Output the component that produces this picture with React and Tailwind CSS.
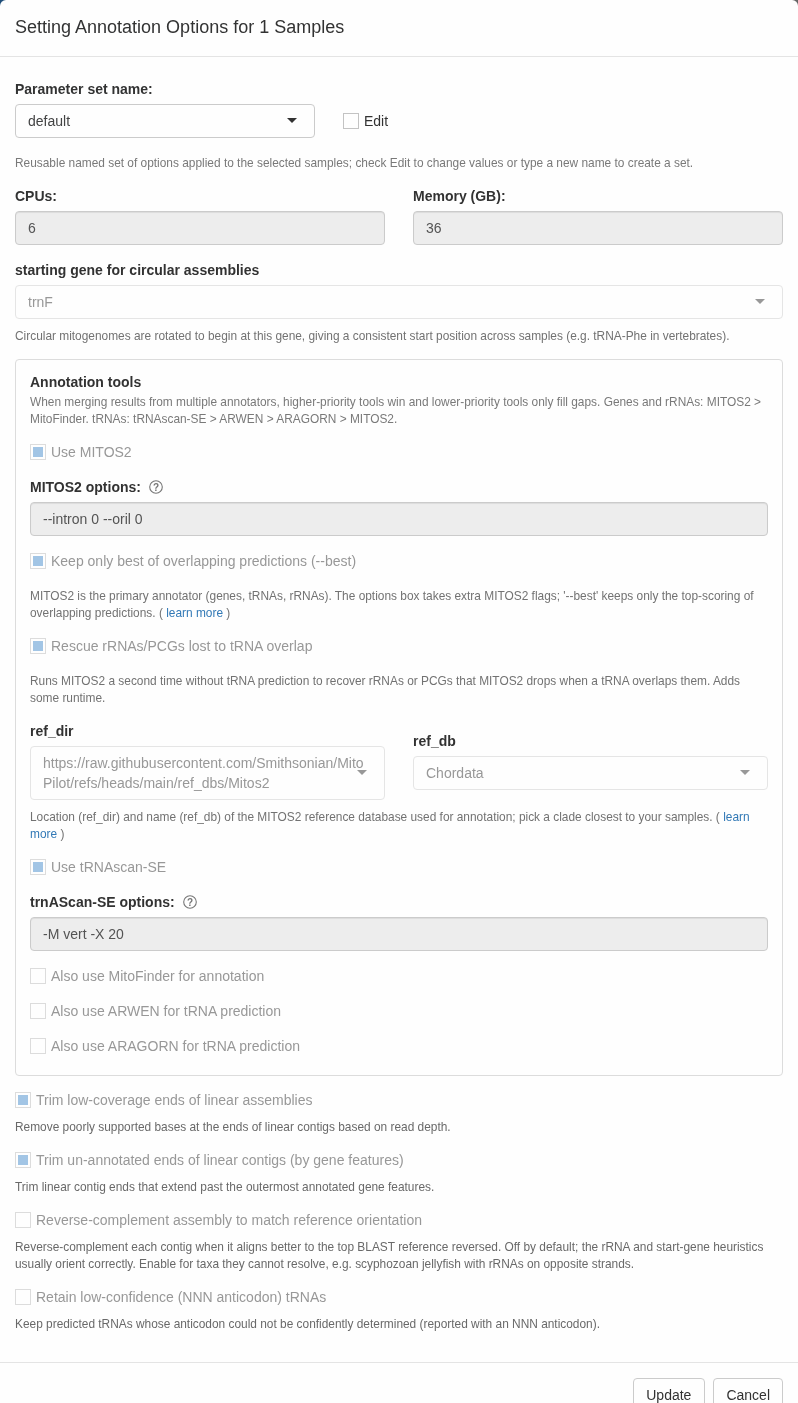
import React from "react";

function Caret({ muted }) {
  return (
    <span
      className={`w-0 h-0 border-x-[5px] border-x-transparent border-t-[5px] ${
        muted ? "border-t-[#999999]" : "border-t-[#333333]"
      }`}
    />
  );
}

function Help({ children, className = "" }) {
  return <p className={`text-[11.9px] leading-[17px] ${className}`}>{children}</p>;
}

function Label({ children, className = "" }) {
  return <label className={`block font-bold text-sm leading-5 text-[#333333] ${className}`}>{children}</label>;
}

function Check({ checked, children, className = "" }) {
  return (
    <label className={`flex items-center h-4 text-sm leading-5 text-[#999999] ${className}`}>
      <span className="flex items-center justify-center w-4 h-4 mr-[5px] border border-[#dddddd] bg-white shrink-0">
        {checked && <span className="block w-2.5 h-2.5 bg-[#a3c6e6]" />}
      </span>
      {children}
    </label>
  );
}

function ReadonlyInput({ value }) {
  return (
    <div className="flex items-center h-[34px] px-3 rounded border border-[#cccccc] bg-[#eeeeee] text-sm text-[#555555] shadow-[inset_0_1px_1px_rgba(0,0,0,0.075)]">
      {value}
    </div>
  );
}

function MutedSelect({ value }) {
  return (
    <div className="flex items-center justify-between h-[34px] pl-3 pr-[17px] rounded border border-[#e6e6e6] bg-white text-sm text-[#999999]">
      <span>{value}</span>
      <Caret muted />
    </div>
  );
}

function HelpIcon() {
  return (
    <svg width="14" height="14" viewBox="0 0 14 14" className="ml-2 shrink-0">
      <circle cx="7" cy="7" r="6.3" fill="none" stroke="#777777" strokeWidth="1.1" />
      <text x="7" y="10.5" textAnchor="middle" fontSize="10" fontWeight="700" fill="#777777" fontFamily="Liberation Sans">?</text>
    </svg>
  );
}

function Link({ children }) {
  return <a className="text-[#337ab7]">{children}</a>;
}

export default function App() {
  return (
    <div className="h-screen overflow-hidden bg-[linear-gradient(to_right,#1f4e79_50%,#666666_50%)] font-['Liberation_Sans',Arial,sans-serif]">
      <div className="rounded-t-md bg-white text-sm text-[#333333] [will-change:transform] opacity-[0.999]">
        <header className="px-[15px] py-[15px] border-b border-[#e5e5e5]">
          <h4 className="text-lg leading-[25.7px] text-[#333333]">Setting Annotation Options for 1 Samples</h4>
        </header>

        <main className="px-[15px] pt-[22px] pb-[29px]">
          <Label>Parameter set name:</Label>
          <div className="flex items-center mt-[5px]">
            <div className="flex items-center justify-between w-[300px] h-[34px] pl-3 pr-[17px] rounded border border-[#cccccc] bg-white text-[#444444]">
              <span>default</span>
              <Caret />
            </div>
            <label className="flex items-center ml-7 text-[#333333]">
              <span className="w-4 h-4 mr-[5px] border border-[#c4c4c4] bg-white" />
              Edit
            </label>
          </div>
          <Help className="mt-[17px] text-[#7a7a7a]">
            Reusable named set of options applied to the selected samples; check Edit to change values or type a new name to create a set.
          </Help>

          <div className="grid grid-cols-2 gap-7 mt-3.5">
            <div>
              <Label>CPUs:</Label>
              <div className="mt-[5px]"><ReadonlyInput value="6" /></div>
            </div>
            <div>
              <Label>Memory (GB):</Label>
              <div className="mt-[5px]"><ReadonlyInput value="36" /></div>
            </div>
          </div>

          <Label className="mt-[15px]">starting gene for circular assemblies</Label>
          <div className="mt-[5px]"><MutedSelect value="trnF" /></div>
          <Help className="mt-[9px] text-[#737373]">
            Circular mitogenomes are rotated to begin at this gene, giving a consistent start position across samples (e.g. tRNA-Phe in vertebrates).
          </Help>

          <section className="mt-[14px] rounded border border-[#dddddd] px-[14px] pt-3 pb-[21px]">
            <Label>Annotation tools</Label>
            <Help className="mt-0.5 text-[#7a7a7a]">
              When merging results from multiple annotators, higher-priority tools win and lower-priority tools only fill gaps. Genes and rRNAs: MITOS2 &gt; MitoFinder. tRNAs: tRNAscan-SE &gt; ARWEN &gt; ARAGORN &gt; MITOS2.
            </Help>

            <Check checked className="mt-4">Use MITOS2</Check>

            <div className="flex items-center mt-[17px]">
              <Label>MITOS2 options:</Label>
              <HelpIcon />
            </div>
            <div className="mt-[5px]"><ReadonlyInput value="--intron 0 --oril 0" /></div>

            <Check checked className="mt-[17px]">Keep only best of overlapping predictions (--best)</Check>
            <Help className="mt-[19px] text-[#737373]">
              MITOS2 is the primary annotator (genes, tRNAs, rRNAs). The options box takes extra MITOS2 flags; '--best' keeps only the top-scoring of overlapping predictions. ( <Link>learn more</Link> )
            </Help>

            <Check checked className="mt-4">Rescue rRNAs/PCGs lost to tRNA overlap</Check>
            <Help className="mt-[19px] text-[#737373]">
              Runs MITOS2 a second time without tRNA prediction to recover rRNAs or PCGs that MITOS2 drops when a tRNA overlaps them. Adds some runtime.
            </Help>

            <div className="grid grid-cols-2 gap-7 items-center mt-3.5">
              <div>
                <Label>ref_dir</Label>
                <div className="relative mt-[5px] h-[54px] pl-3 pr-[19px] py-1.5 rounded border border-[#e6e6e6] bg-white text-sm leading-5 text-[#999999] break-all">
                  https://raw.githubusercontent.com/Smithsonian/MitoPilot/refs/heads/main/ref_dbs/Mitos2
                  <span className="absolute right-[17px] top-[23px] flex"><Caret muted /></span>
                </div>
              </div>
              <div>
                <Label>ref_db</Label>
                <div className="mt-[5px]"><MutedSelect value="Chordata" /></div>
              </div>
            </div>
            <Help className="mt-[9px] text-[#737373]">
              Location (ref_dir) and name (ref_db) of the MITOS2 reference database used for annotation; pick a clade closest to your samples. ( <Link>learn more</Link> )
            </Help>

            <Check checked className="mt-4">Use tRNAscan-SE</Check>

            <div className="flex items-center mt-[17px]">
              <Label>trnAScan-SE options:</Label>
              <HelpIcon />
            </div>
            <div className="mt-[5px]"><ReadonlyInput value="-M vert -X 20" /></div>

            <Check className="mt-[17px]">Also use MitoFinder for annotation</Check>
            <Check className="mt-[19px]">Also use ARWEN for tRNA prediction</Check>
            <Check className="mt-[19px]">Also use ARAGORN for tRNA prediction</Check>
          </section>

          <Check checked className="mt-4">Trim low-coverage ends of linear assemblies</Check>
          <Help className="mt-[11px] text-[#6a6a6a]">Remove poorly supported bases at the ends of linear contigs based on read depth.</Help>

          <Check checked className="mt-4">Trim un-annotated ends of linear contigs (by gene features)</Check>
          <Help className="mt-[11px] text-[#6a6a6a]">Trim linear contig ends that extend past the outermost annotated gene features.</Help>

          <Check className="mt-4">Reverse-complement assembly to match reference orientation</Check>
          <Help className="mt-[11px] text-[#6a6a6a]">
            Reverse-complement each contig when it aligns better to the top BLAST reference reversed. Off by default; the rRNA and start-gene heuristics usually orient correctly. Enable for taxa they cannot resolve, e.g. scyphozoan jellyfish with rRNAs on opposite strands.
          </Help>

          <Check className="mt-4">Retain low-confidence (NNN anticodon) tRNAs</Check>
          <Help className="mt-[11px] text-[#6a6a6a]">Keep predicted tRNAs whose anticodon could not be confidently determined (reported with an NNN anticodon).</Help>
        </main>

        <footer className="flex justify-end gap-2 px-[15px] py-[15px] border-t border-[#e5e5e5]">
          <button className="h-[34px] pl-3 pr-[13px] rounded border border-[#cccccc] bg-white text-sm text-[#333333]">Update</button>
          <button className="h-[34px] px-3 rounded border border-[#cccccc] bg-white text-sm text-[#333333]">Cancel</button>
        </footer>
      </div>
    </div>
  );
}
